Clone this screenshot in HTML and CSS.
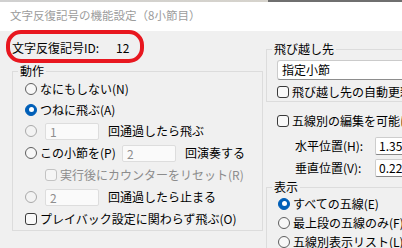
FILE: index.html
```html
<!DOCTYPE html>
<html lang="ja">
<head>
<meta charset="utf-8">
<title>文字反復記号の機能設定</title>
<link rel="stylesheet" href="styles.css">
</head>
<body>
<div class="screen">
  <div class="topedge"></div>
  <header class="titlebar"><span class="title">文字反復記号の機能設定（8小節目）</span></header>
  <main class="client">
    <section class="col-left">
      <div class="idrow"><span>文字反復記号ID:</span><span class="idval">12</span></div>
      <fieldset class="group g-action">
        <legend>動作</legend>
        <div class="row h21"><span class="radio"></span><span>なにもしない(N)</span></div>
        <div class="row h21"><span class="radio on"></span><span>つねに飛ぶ(A)</span></div>
        <div class="row h22"><span class="radio dis"></span><span class="field dis f-first">1</span><span class="after">回通過したら飛ぶ</span></div>
        <div class="row h22"><span class="radio"></span><span class="lbl-p">この小節を(P)</span><span class="field dis">2</span><span class="after">回演奏する</span></div>
        <div class="row h22 sub"><span class="check dis"></span><span class="muted">実行後にカウンターをリセット(R)</span></div>
        <div class="row h22"><span class="radio dis"></span><span class="field dis f-first">2</span><span class="after">回通過したら止まる</span></div>
        <div class="row h22"><span class="check"></span><span>プレイバック設定に関わらず飛ぶ(O)</span></div>
      </fieldset>
    </section>
    <section class="col-right">
      <fieldset class="group g-jump">
        <legend>飛び越し先</legend>
        <div class="combo">指定小節</div>
        <div class="row h19 r-in"><span class="check"></span><span>飛び越し先の自動更新</span></div>
      </fieldset>
      <div class="row h20 r-staff"><span class="check"></span><span>五線別の編集を可能にする</span></div>
      <div class="row h20 r-pos"><span class="pos-lbl">水平位置(H):</span><span class="num">1.357</span></div>
      <div class="row h20 r-pos r-pos2"><span class="pos-lbl">垂直位置(V):</span><span class="num">0.225</span></div>
      <fieldset class="group g-view">
        <legend>表示</legend>
        <div class="row h19 r-in"><span class="radio on"></span><span>すべての五線(E)</span></div>
        <div class="row h19 r-in"><span class="radio"></span><span>最上段の五線のみ(F)</span></div>
        <div class="row h19 r-in"><span class="radio"></span><span>五線別表示リスト(L):</span></div>
      </fieldset>
    </section>
  </main>
  <div class="highlight"></div>
</div>
</body>
</html>
```
FILE: styles.css
```css
html, body {
  margin: 0;
  padding: 0;
  background: #f0f0f0;
}

.screen {
  position: relative;
  width: 402px;
  height: 248px;
  overflow: hidden;
  background: #f0f0f0;
  font-family: "Noto Sans CJK JP", "Noto Sans", sans-serif;
  font-size: 12px;
  color: #000;
}

.topedge {
  height: 2px;
  background: linear-gradient(to right, #d0d0d0 0, #d6d3cc 268px, #6f6f6f 268px, #6f6f6f 100%);
}

.titlebar {
  height: 29px;
  box-sizing: border-box;
  padding: 6px 0 0 10px;
  background: #ffffff;
  color: #9c9c9c;
  font-size: 11.5px;
  line-height: 14px;
  white-space: nowrap;
}

.client {
  display: grid;
  grid-template-columns: 263px 300px;
  height: 217px;
}

.col-left {
  display: flex;
  flex-direction: column;
  padding: 10px 0 0 12px;
}

.idrow {
  display: flex;
  height: 14px;
  line-height: 14px;
  white-space: nowrap;
}

.idval {
  margin-left: 17px;
}

.group {
  margin: 0;
  padding: 0;
  border: 1px solid #dcdcdc;
  min-width: 0;
  box-sizing: border-box;
}

.group legend {
  padding: 0 2px;
  margin-left: 5px;
  line-height: 14px;
  white-space: nowrap;
}

.g-action {
  margin-top: 9px;
  width: 251px;
}

.row {
  display: flex;
  align-items: center;
  white-space: nowrap;
  line-height: 14px;
}

.g-action .row {
  padding-left: 12px;
}

.g-action .row.sub {
  padding-left: 32px;
}

.h19 { height: 19px; }
.h20 { height: 20px; }
.h21 { height: 21px; }
.h22 { height: 22px; }

.radio {
  flex: none;
  width: 12px;
  height: 12px;
  box-sizing: border-box;
  border: 1px solid #5e5e5e;
  border-radius: 50%;
  background: #f7f7f7;
  margin-right: 3px;
  display: grid;
  place-items: center;
}

.radio.dis {
  border-color: #a9a9a9;
  background: #f3f3f3;
}

.radio.on {
  border-color: #005fb8;
  background: #005fb8;
}

.radio.on::after {
  content: "";
  width: 5px;
  height: 5px;
  border-radius: 50%;
  background: #ffffff;
}

.check {
  flex: none;
  width: 12px;
  height: 12px;
  box-sizing: border-box;
  border: 1px solid #3a3a3a;
  border-radius: 3px;
  background: #f9f9f9;
  margin-right: 3px;
}

.check.dis {
  border-color: #c3c3c3;
  background: #f5f5f5;
}

.muted {
  color: #8c8c8c;
}

.field {
  flex: none;
  width: 54px;
  height: 17px;
  box-sizing: border-box;
  padding-left: 4px;
  line-height: 15px;
  border: 1px solid #dddddd;
  border-radius: 2px;
  background: #fafafa;
  color: #8e8e8e;
}

.field.f-first {
  margin-left: 5px;
}

.lbl-p {
  width: 82px;
}

.after {
  margin-left: 9px;
}

.col-right {
  display: flex;
  flex-direction: column;
  padding: 11px 0 0 3px;
}

.g-jump {
  width: 250px;
}

.combo {
  margin: 4px 0 0 10px;
  height: 20px;
  box-sizing: border-box;
  border: 1px solid #cbcbcb;
  border-bottom-color: #8d8d8d;
  border-radius: 3px;
  background: #ffffff;
  padding-left: 4px;
  line-height: 18px;
  white-space: nowrap;
}

.g-jump .r-in {
  margin-top: 2px;
}

.r-in {
  padding-left: 10px;
}

.r-staff {
  margin-top: 9px;
  padding-left: 11px;
}

.r-pos {
  margin-top: 5px;
  padding-left: 29px;
}

.r-pos2 {
  margin-top: 2px;
}

.pos-lbl {
  width: 80px;
}

.num {
  width: 80px;
  height: 18px;
  box-sizing: border-box;
  border: 1px solid #cdcdcd;
  border-bottom-color: #878787;
  border-radius: 2px;
  background: #ffffff;
  padding-left: 3px;
  line-height: 16px;
}

.g-view {
  margin-top: 2px;
  width: 250px;
}

.g-view .r-in {
  padding-left: 11px;
}

.highlight {
  position: absolute;
  left: 6px;
  top: 30px;
  width: 138px;
  height: 33px;
  box-sizing: border-box;
  border: 4px solid #e8171f;
  border-radius: 15px;
}
```
